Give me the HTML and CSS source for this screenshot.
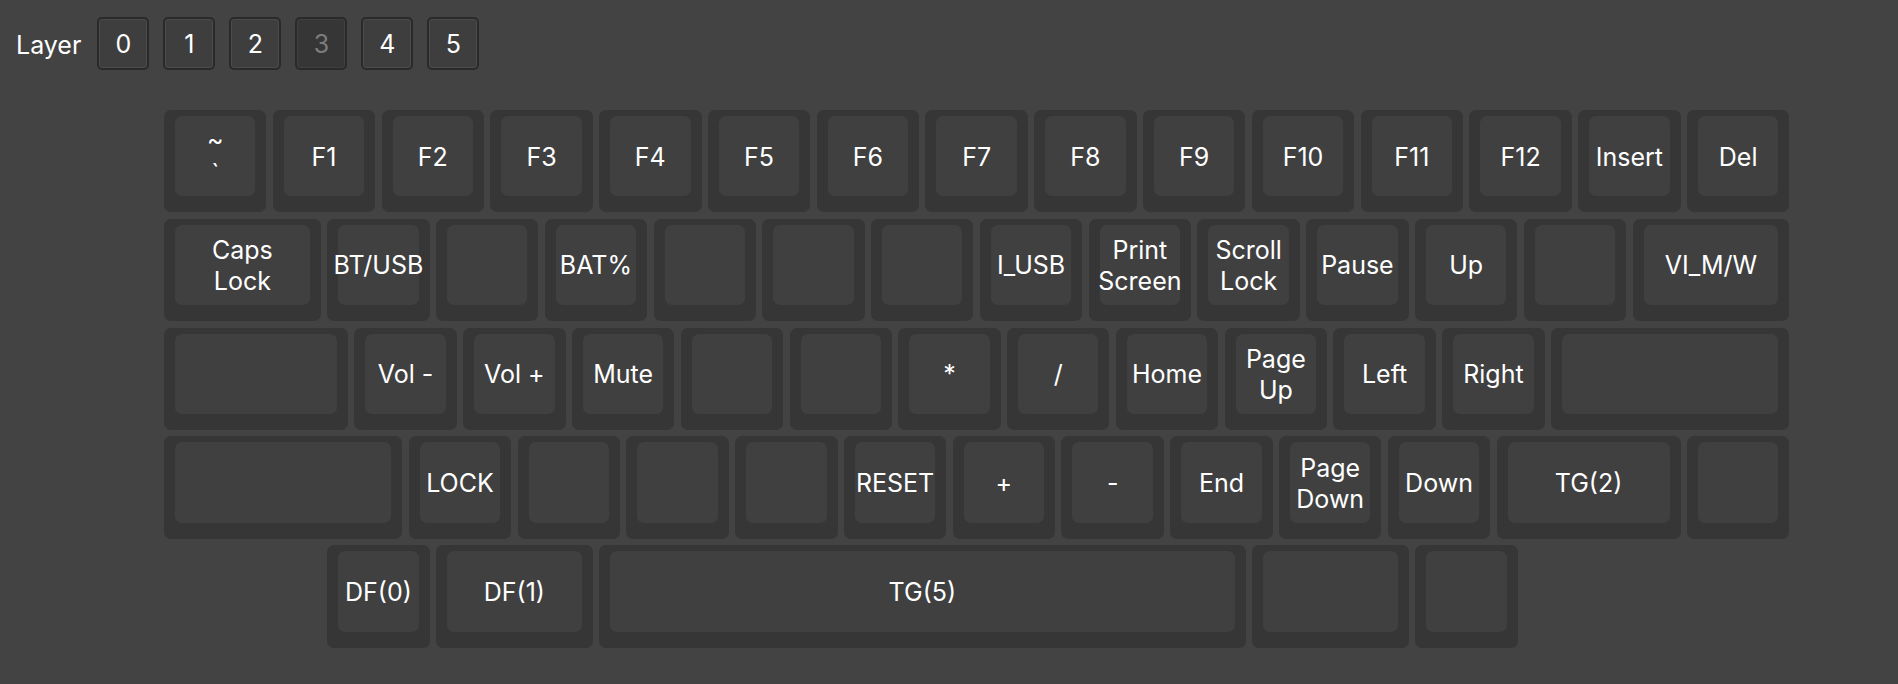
FILE: index.html
```html
<!DOCTYPE html>
<html lang="en">
<head>
<meta charset="utf-8">
<title>Keymap</title>
<link rel="stylesheet" href="styles.css">
</head>
<body>
<div class="layer-bar">
  <span class="layer-label">Layer</span>
  <button class="layer-btn">0</button>
  <button class="layer-btn">1</button>
  <button class="layer-btn">2</button>
  <button class="layer-btn active">3</button>
  <button class="layer-btn">4</button>
  <button class="layer-btn">5</button>
</div>
<div class="keyboard">
  <div class="row">
    <div class="key"><div class="cap"><span class="lbl tight">~<br>`</span></div></div>
    <div class="key"><div class="cap"><span class="lbl">F1</span></div></div>
    <div class="key"><div class="cap"><span class="lbl">F2</span></div></div>
    <div class="key"><div class="cap"><span class="lbl">F3</span></div></div>
    <div class="key"><div class="cap"><span class="lbl">F4</span></div></div>
    <div class="key"><div class="cap"><span class="lbl">F5</span></div></div>
    <div class="key"><div class="cap"><span class="lbl">F6</span></div></div>
    <div class="key"><div class="cap"><span class="lbl">F7</span></div></div>
    <div class="key"><div class="cap"><span class="lbl">F8</span></div></div>
    <div class="key"><div class="cap"><span class="lbl">F9</span></div></div>
    <div class="key"><div class="cap"><span class="lbl">F10</span></div></div>
    <div class="key"><div class="cap"><span class="lbl">F11</span></div></div>
    <div class="key"><div class="cap"><span class="lbl">F12</span></div></div>
    <div class="key"><div class="cap"><span class="lbl">Insert</span></div></div>
    <div class="key"><div class="cap"><span class="lbl">Del</span></div></div>
  </div>
  <div class="row">
    <div class="key w15"><div class="cap"><span class="lbl">Caps<br>Lock</span></div></div>
    <div class="key"><div class="cap"><span class="lbl">BT/USB</span></div></div>
    <div class="key"><div class="cap"></div></div>
    <div class="key"><div class="cap"><span class="lbl">BAT%</span></div></div>
    <div class="key"><div class="cap"></div></div>
    <div class="key"><div class="cap"></div></div>
    <div class="key"><div class="cap"></div></div>
    <div class="key"><div class="cap"><span class="lbl">I_USB</span></div></div>
    <div class="key"><div class="cap"><span class="lbl">Print<br>Screen</span></div></div>
    <div class="key"><div class="cap"><span class="lbl">Scroll<br>Lock</span></div></div>
    <div class="key"><div class="cap"><span class="lbl">Pause</span></div></div>
    <div class="key"><div class="cap"><span class="lbl">Up</span></div></div>
    <div class="key"><div class="cap"></div></div>
    <div class="key w15"><div class="cap"><span class="lbl">VI_M/W</span></div></div>
  </div>
  <div class="row">
    <div class="key w175"><div class="cap"></div></div>
    <div class="key"><div class="cap"><span class="lbl">Vol -</span></div></div>
    <div class="key"><div class="cap"><span class="lbl">Vol +</span></div></div>
    <div class="key"><div class="cap"><span class="lbl">Mute</span></div></div>
    <div class="key"><div class="cap"></div></div>
    <div class="key"><div class="cap"></div></div>
    <div class="key"><div class="cap"><span class="lbl">*</span></div></div>
    <div class="key"><div class="cap"><span class="lbl">/</span></div></div>
    <div class="key"><div class="cap"><span class="lbl">Home</span></div></div>
    <div class="key"><div class="cap"><span class="lbl">Page<br>Up</span></div></div>
    <div class="key"><div class="cap"><span class="lbl">Left</span></div></div>
    <div class="key"><div class="cap"><span class="lbl">Right</span></div></div>
    <div class="key w225"><div class="cap"></div></div>
  </div>
  <div class="row">
    <div class="key w225"><div class="cap"></div></div>
    <div class="key"><div class="cap"><span class="lbl">LOCK</span></div></div>
    <div class="key"><div class="cap"></div></div>
    <div class="key"><div class="cap"></div></div>
    <div class="key"><div class="cap"></div></div>
    <div class="key"><div class="cap"><span class="lbl">RESET</span></div></div>
    <div class="key"><div class="cap"><span class="lbl">+</span></div></div>
    <div class="key"><div class="cap"><span class="lbl">-</span></div></div>
    <div class="key"><div class="cap"><span class="lbl">End</span></div></div>
    <div class="key"><div class="cap"><span class="lbl">Page<br>Down</span></div></div>
    <div class="key"><div class="cap"><span class="lbl">Down</span></div></div>
    <div class="key w175"><div class="cap"><span class="lbl">TG(2)</span></div></div>
    <div class="key"><div class="cap"></div></div>
  </div>
  <div class="row row-offset">
    <div class="key"><div class="cap"><span class="lbl">DF(0)</span></div></div>
    <div class="key w15"><div class="cap"><span class="lbl">DF(1)</span></div></div>
    <div class="key w6"><div class="cap"><span class="lbl">TG(5)</span></div></div>
    <div class="key w15"><div class="cap"></div></div>
    <div class="key"><div class="cap"></div></div>
  </div>
</div>
</body>
</html>
```
FILE: styles.css
```css
:root {
  --u: 108.8px;
  --g: 6.4px;
}
* { box-sizing: border-box; }
html, body {
  margin: 0;
  padding: 0;
  background: #434343;
  color: #ffffff;
  font-family: Inter, "Liberation Sans", sans-serif;
}
body { width: 1898px; height: 684px; overflow: hidden; }

.layer-bar {
  display: flex;
  align-items: center;
  gap: 14px;
  padding: 17px 0 0 16px;
  height: 70px;
}
.layer-label {
  font-size: 25px;
  margin-right: 2px;
  padding-top: 2px;
  color: #ffffff;
}
.layer-btn {
  width: 52px;
  height: 53px;
  padding: 2px 0 0;
  border: 2px solid #2a2a2a;
  border-radius: 5px;
  background: #3e3e3e;
  box-shadow: inset 0 0 0 1px #4b4b4b;
  color: #ffffff;
  font-family: Inter, "Liberation Sans", sans-serif;
  font-size: 25px;
  line-height: 1;
}
.layer-btn.active {
  background: #363636;
  box-shadow: inset 0 0 0 1px #404040;
  color: #7c7c7c;
}

.keyboard {
  margin: 40px 0 0 164px;
  display: flex;
  flex-direction: column;
  gap: var(--g);
}
.row {
  display: flex;
  gap: var(--g);
}
.row-offset { margin-left: calc(var(--u) * 1.5); }

.key {
  width: calc(var(--u) - var(--g));
  height: calc(var(--u) - var(--g));
  background: #363636;
  border-radius: 7px;
  padding: 6px 11px 16px;
  flex: none;
}
.key.w15 { width: calc(var(--u) * 1.5 - var(--g)); }
.key.w175 { width: calc(var(--u) * 1.75 - var(--g)); }
.key.w225 { width: calc(var(--u) * 2.25 - var(--g)); }
.key.w6 { width: calc(var(--u) * 6 - var(--g)); }

.cap {
  height: 100%;
  background: #404040;
  border-radius: 7px;
  display: flex;
  align-items: center;
  justify-content: center;
}
.lbl {
  font-size: 25px;
  line-height: 31px;
  padding-top: 2px;
  text-align: center;
  white-space: nowrap;
  color: #ffffff;
}
.lbl.tight { line-height: 33px; padding-top: 2px; }
```
